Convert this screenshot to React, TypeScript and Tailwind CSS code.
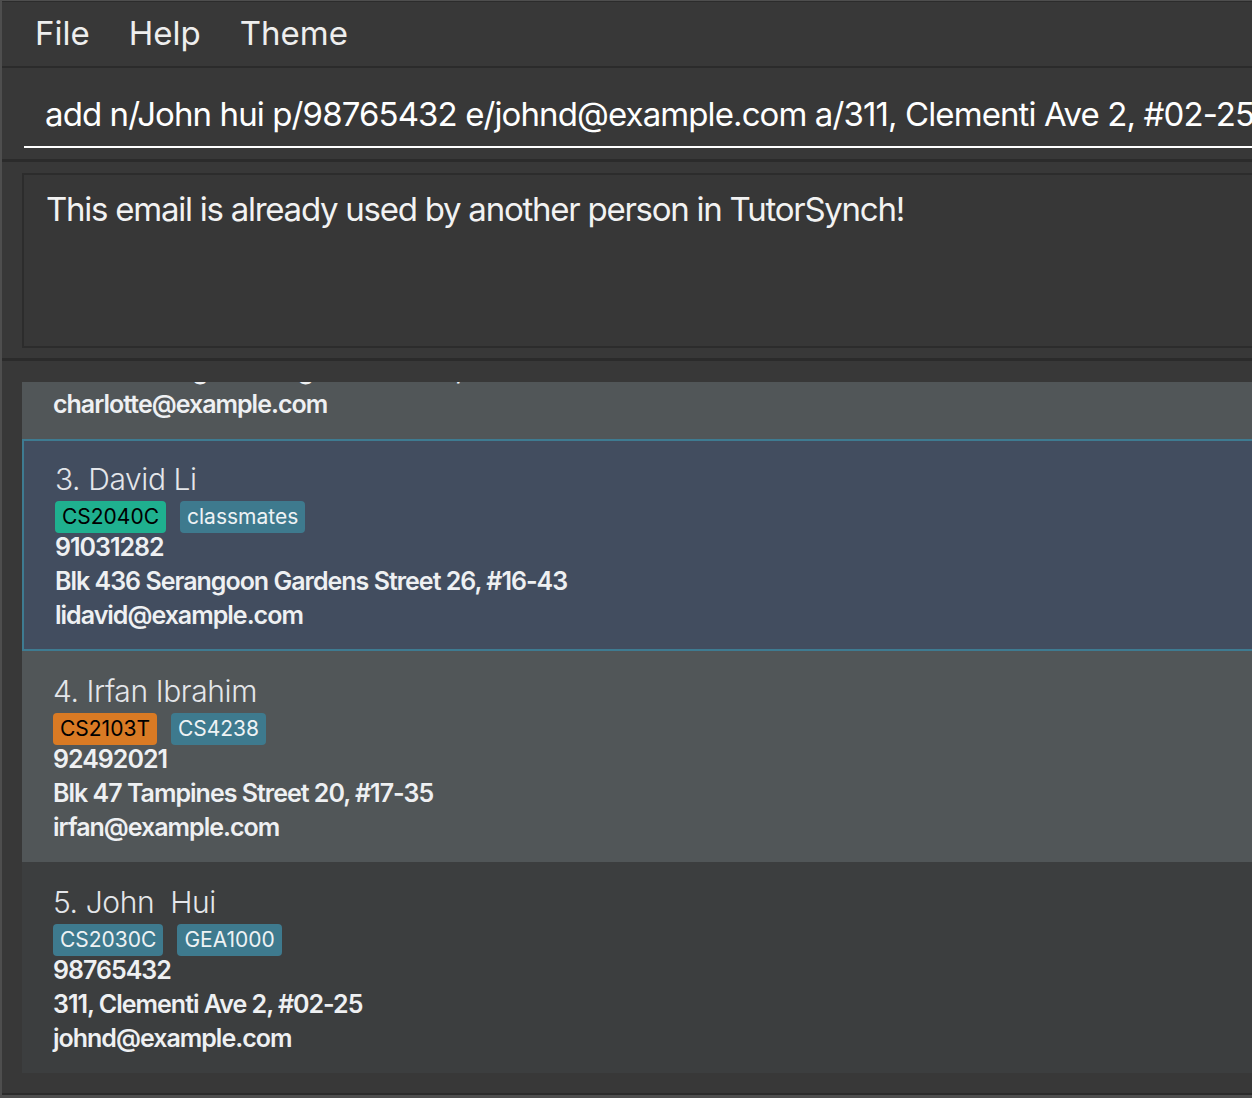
import React from 'react';

type Tag = { label: string; tone: 'green' | 'orange' | 'blue' };

type Person = {
  idx: number;
  name: string;
  tags: Tag[];
  phone: string;
  address: string;
  email: string;
};

const people: Person[] = [
  {
    idx: 2,
    name: 'Charlotte Oliveiro',
    tags: [{ label: 'neighbours', tone: 'blue' }],
    phone: '93210283',
    address: 'Blk 30 Lorong 3 Serangoon Gardens, #07-18',
    email: 'charlotte@example.com',
  },
  {
    idx: 3,
    name: 'David Li',
    tags: [
      { label: 'CS2040C', tone: 'green' },
      { label: 'classmates', tone: 'blue' },
    ],
    phone: '91031282',
    address: 'Blk 436 Serangoon Gardens Street 26, #16-43',
    email: 'lidavid@example.com',
  },
  {
    idx: 4,
    name: 'Irfan Ibrahim',
    tags: [
      { label: 'CS2103T', tone: 'orange' },
      { label: 'CS4238', tone: 'blue' },
    ],
    phone: '92492021',
    address: 'Blk 47 Tampines Street 20, #17-35',
    email: 'irfan@example.com',
  },
  {
    idx: 5,
    name: 'John  Hui',
    tags: [
      { label: 'CS2030C', tone: 'blue' },
      { label: 'GEA1000', tone: 'blue' },
    ],
    phone: '98765432',
    address: '311, Clementi Ave 2, #02-25',
    email: 'johnd@example.com',
  },
];

const tagTone = {
  green: 'bg-[#1fb08f] text-black',
  orange: 'bg-[#d97a24] text-black',
  blue: 'bg-[#3e7a8e] text-[#eef2f4]',
};

function PersonCard({ p, selected, shade }: { p: Person; selected: boolean; shade: 'light' | 'dark' }) {
  const bg = selected
    ? 'h-[212px] bg-[#424d5f] border-y-2 border-l-2 border-[#3e7b91] pt-[20px]'
    : shade === 'light'
      ? 'h-[211px] bg-[#515658] pt-[22px]'
      : 'h-[211px] bg-[#3c3e3f] pt-[22px]';
  return (
    <div className={`flex flex-col pl-[31px] ${bg}`}>
      <div className="text-[30px] leading-[36px] font-light tracking-[-0.4px] text-[#e4e6ea] whitespace-pre">
        {p.idx}. {p.name}
      </div>
      <div className="flex gap-[14px] mt-[4px]">
        {p.tags.map((t) => (
          <span key={t.label} className={`h-[32px] px-[7px] rounded-[4px] text-[21px] leading-[32px] ${tagTone[t.tone]}`}>
            {t.label}
          </span>
        ))}
      </div>
      <div className="text-[25px] leading-[34px] font-semibold tracking-[-1px] text-[#eef0f2] -mt-[3px]">
        <div>{p.phone}</div>
        <div>{p.address}</div>
        <div>{p.email}</div>
      </div>
    </div>
  );
}

export default function App() {
  return (
    <div
      className="w-[1252px] h-[1098px] overflow-hidden bg-[#383838] border-l-2 border-[#4e4e4e] flex flex-col text-white"
      style={{ fontFamily: 'Inter, "Noto Sans", sans-serif' }}
    >
      <div className="h-[2px] bg-[#2c2c2c] border-t border-[#4e4e4e]" />
      {/* menu bar */}
      <div className="h-[64px] flex items-center gap-[39px] pl-[33px] text-[33px] text-[#eeeeee]">
        <span>File</span>
        <span>Help</span>
        <span>Theme</span>
      </div>
      <div className="h-[2px] bg-[#2b2b2b]" />

      {/* command box */}
      <div className="h-[92px] pl-[22px] pt-[20px]">
        <div className="border-b-2 border-white h-[60px] pl-[21px] text-[33px] leading-[52px] whitespace-nowrap text-white tracking-[-0.9px]">
          add n/John hui p/98765432 e/johnd@example.com a/311, Clementi Ave 2, #02-25
        </div>
      </div>
      <div className="h-[3px] bg-[#2b2b2b]" />

      {/* result display */}
      <div className="h-[197px] pl-[20px] pt-[11px]">
        <div className="h-[175px] border-2 border-r-0 border-[#2c2c2c] bg-[#373737] pl-[22px] pt-[12px] text-[33px] leading-[44px] text-[#f2f2f2] tracking-[-1.25px]">
          This email is already used by another person in TutorSynch!
        </div>
      </div>
      <div className="h-[3px] bg-[#2b2b2b]" />

      {/* person list */}
      <div className="flex-1 pl-[20px] pt-[21px] pb-[20px] flex flex-col">
        <div className="flex-1 overflow-hidden">
          <div className="-mt-[154px]">
            {people.map((p) => (
              <PersonCard key={p.idx} p={p} selected={p.idx === 3} shade={p.idx === 5 ? 'dark' : 'light'} />
            ))}
          </div>
        </div>
      </div>
      <div className="h-[2px] bg-[#2b2b2b]" />
      <div className="h-[3px] bg-[#4e4e4e]" />
    </div>
  );
}
